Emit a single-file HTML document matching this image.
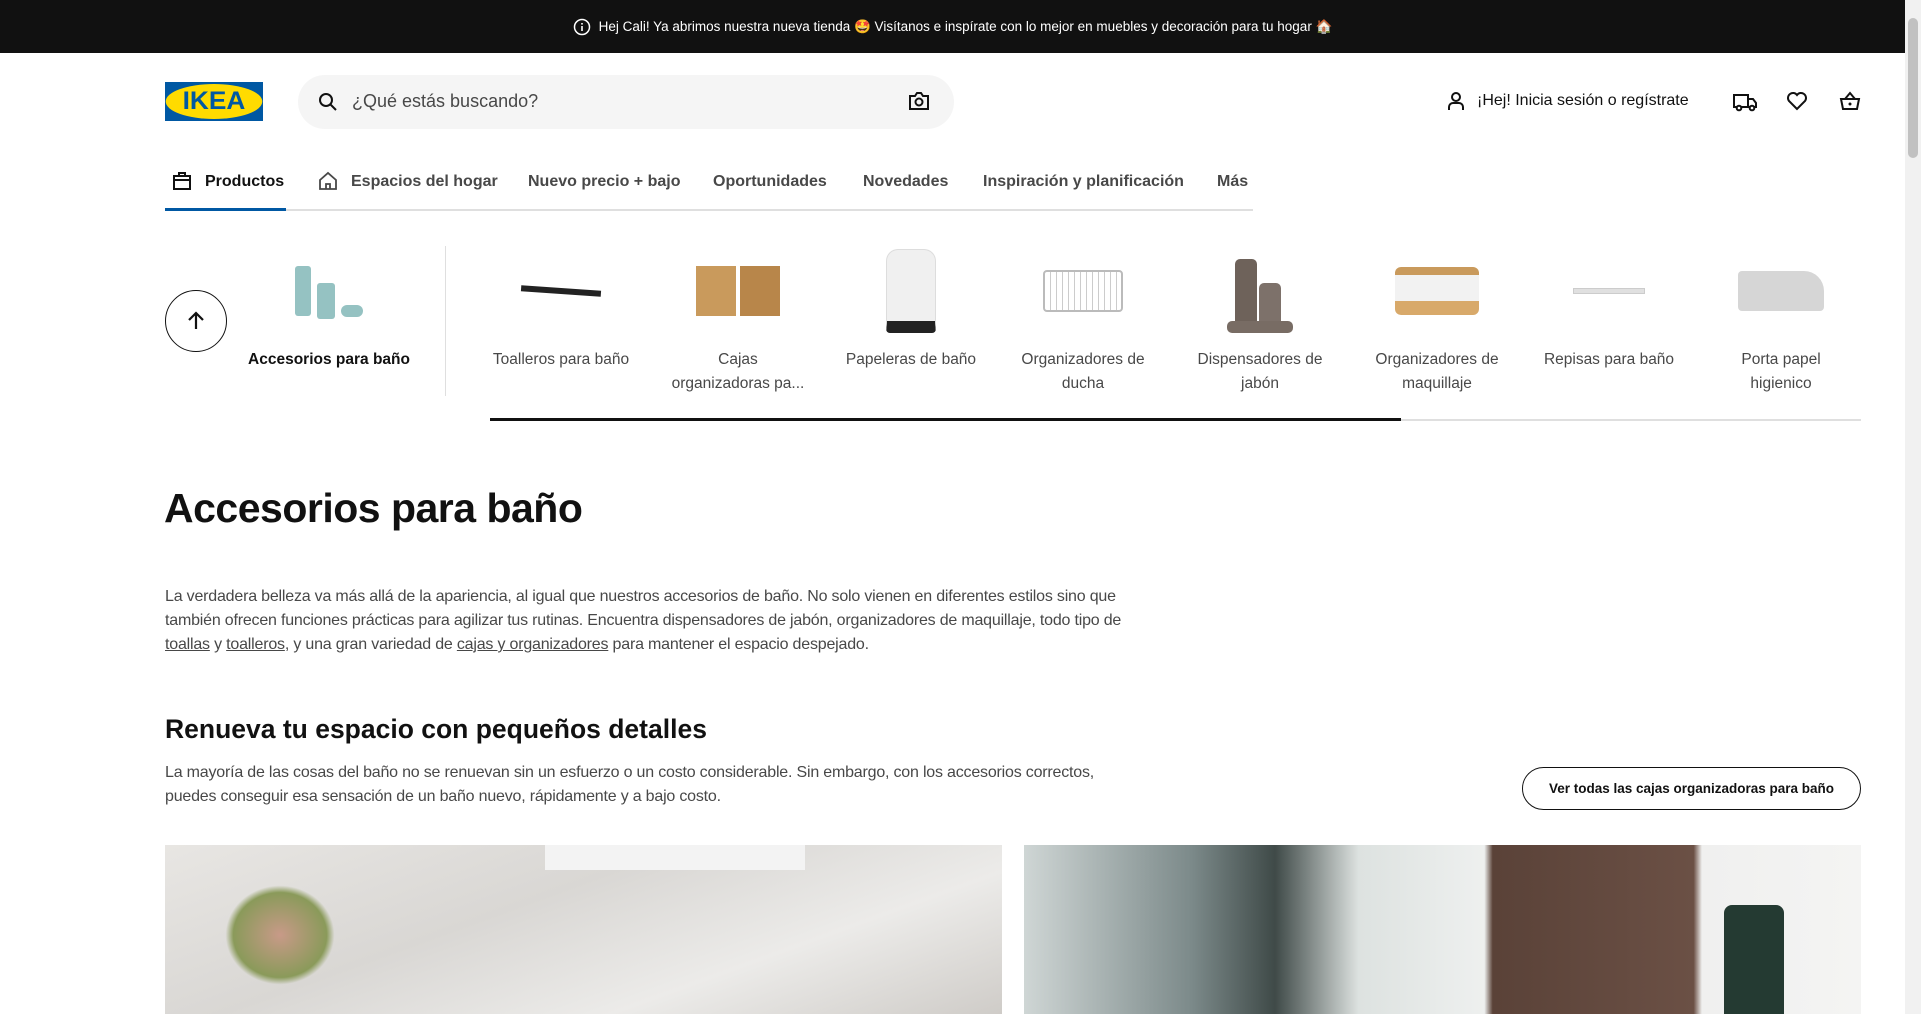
<!DOCTYPE html>
<html><head><meta charset="utf-8"><style>
*{box-sizing:border-box;margin:0;padding:0}
body{width:1921px;height:1014px;overflow:hidden;background:#fff;font-family:"Liberation Sans","Noto Sans CJK JP",sans-serif;color:#111;position:relative}
.abs{position:absolute}
.top{left:0;top:0;width:1905px;height:53px;background:#111;color:#fff;font-size:13.5px;display:flex;align-items:center;justify-content:center;gap:8px}
.scroll{right:0;top:0;width:16px;height:1014px;background:#f1f1f1}
.thumb{right:3px;top:18px;width:10px;height:140px;background:#c1c1c1;border-radius:5px}
.nav{top:173px;left:165px;font-size:16px;font-weight:bold;color:#484848}
.nav span{position:absolute;white-space:nowrap}
.cat{position:absolute;top:245px;width:140px;text-align:center;font-size:15.5px;color:#484848;line-height:24px}
.cat .img{height:92px;display:flex;align-items:center;justify-content:center;margin-bottom:11px}
p.t{font-size:16px;line-height:24px;color:#484848}
u{color:#484848}
</style></head><body>
<div class="abs top"><svg width="18" height="18" viewBox="0 0 18 18"><circle cx="9" cy="9" r="7.5" fill="none" stroke="#fff" stroke-width="1.5"/><rect x="8.2" y="8" width="1.6" height="5" fill="#fff"/><rect x="8.2" y="5" width="1.6" height="1.6" fill="#fff"/></svg><span>Hej Cali! Ya abrimos nuestra nueva tienda 🤩 Visítanos e inspírate con lo mejor en muebles y decoración para tu hogar 🏠</span></div>
<div class="abs scroll"></div><div class="abs thumb"></div>

<div class="abs" style="left:165px;top:82px;width:98px;height:39px;background:#0058a3;display:flex;align-items:center;justify-content:center"><div style="width:92px;height:35px;background:#ffdb00;border-radius:50%;display:flex;align-items:center;justify-content:center;font-weight:900;font-size:25px;color:#0058a3;letter-spacing:0px;transform:scaleX(1.05)">IKEA</div></div>
<div class="abs" style="left:298px;top:75px;width:656px;height:54px;background:#f5f5f5;border-radius:27px"></div>
<svg class="abs" style="left:318px;top:92px" width="20" height="20" viewBox="0 0 20 20"><circle cx="8" cy="8" r="6" fill="none" stroke="#111" stroke-width="2"/><path d="M12.5 12.5L18 18" stroke="#111" stroke-width="2"/></svg>
<div class="abs" style="left:352px;top:91px;font-size:18px;color:#484848">¿Qué estás buscando?</div>
<svg class="abs" style="left:908px;top:91px" width="22" height="20" viewBox="0 0 22 20"><path d="M2 5h5l2-3h4l2 3h5v13H2z" fill="none" stroke="#111" stroke-width="2"/><circle cx="11" cy="11" r="3.5" fill="none" stroke="#111" stroke-width="2"/></svg>
<svg class="abs" style="left:1445px;top:90px" width="22" height="22" viewBox="0 0 22 22"><circle cx="11" cy="7" r="4" fill="none" stroke="#111" stroke-width="2"/><path d="M4 20v-3a4 4 0 014-4h6a4 4 0 014 4v3" fill="none" stroke="#111" stroke-width="2"/></svg>
<div class="abs" style="left:1477px;top:92px;font-size:16px;color:#111">¡Hej! Inicia sesión o regístrate</div>
<svg class="abs" style="left:1732px;top:91px" width="26" height="22" viewBox="0 0 26 22"><path d="M2 4h14v12H2zM16 8h5l3 4v4h-8" fill="none" stroke="#111" stroke-width="2"/><circle cx="7" cy="17" r="2.3" fill="#fff" stroke="#111" stroke-width="2"/><circle cx="20" cy="17" r="2.3" fill="#fff" stroke="#111" stroke-width="2"/></svg>
<svg class="abs" style="left:1786px;top:91px" width="22" height="20" viewBox="0 0 22 20"><path d="M11 18L3 10a4.5 4.5 0 018-6 4.5 4.5 0 018 6z" fill="none" stroke="#111" stroke-width="2"/></svg>
<svg class="abs" style="left:1839px;top:90px" width="22" height="22" viewBox="0 0 22 22"><path d="M2 9h18l-2 10H4zM6 9l5-6 5 6" fill="none" stroke="#111" stroke-width="2"/><circle cx="11" cy="14" r="1.5" fill="#111"/></svg>

<svg class="abs" style="left:172px;top:171px" width="20" height="20" viewBox="0 0 20 20"><path d="M2 5h16v13H2zM7 5V2h6v3M2 9h16" fill="none" stroke="#111" stroke-width="2"/></svg>
<svg class="abs" style="left:318px;top:171px" width="20" height="20" viewBox="0 0 20 20"><path d="M2 9l8-7 8 7v9H2zM8 18v-5h4v5" fill="none" stroke="#484848" stroke-width="1.8"/></svg>
<div class="abs nav">
<span style="left:40px;color:#111">Productos</span>
<span style="left:186px">Espacios del hogar</span>
<span style="left:363px">Nuevo precio + bajo</span>
<span style="left:548px">Oportunidades</span>
<span style="left:698px">Novedades</span>
<span style="left:818px">Inspiración y planificación</span>
<span style="left:1052px">Más</span>
</div>
<div class="abs" style="left:165px;top:209px;width:1088px;height:2px;background:#dfdfdf"></div>
<div class="abs" style="left:165px;top:208px;width:121px;height:3px;background:#0058a3"></div>

<div class="abs" style="left:165px;top:290px;width:62px;height:62px;border:1.5px solid #111;border-radius:50%"></div>
<svg class="abs" style="left:184px;top:309px" width="24" height="24" viewBox="0 0 24 24"><path d="M12 20V5M5 11l7-7 7 7" fill="none" stroke="#111" stroke-width="2.2"/></svg>
<div class="cat" style="left:244px;width:170px"><div class="img"><div style="width:16px;height:50px;background:#7ab3b3;border-radius:3px;margin-right:6px;opacity:.8"></div><div style="width:18px;height:36px;background:#7ab3b3;border-radius:3px;margin:20px 6px 0 0;opacity:.8"></div><div style="width:22px;height:12px;background:#7ab3b3;border-radius:6px;margin-top:40px;opacity:.8"></div></div><b style="color:#111">Accesorios para baño</b></div>
<div class="abs" style="left:445px;top:246px;width:1px;height:150px;background:#dfdfdf"></div>

<div class="cat" style="left:491px"><div class="img"><div style="width:80px;height:6px;background:#222;transform:rotate(4deg)"></div></div>Toalleros para baño</div>
<div class="cat" style="left:668px"><div class="img"><div style="width:40px;height:50px;background:#c99a5c;margin-right:4px"></div><div style="width:40px;height:50px;background:#b8864a"></div></div>Cajas organizadoras pa...</div>
<div class="cat" style="left:841px"><div class="img"><div style="width:50px;height:84px;background:#f0f0f0;border:1px solid #ddd;border-bottom:12px solid #222;border-radius:12px 12px 4px 4px"></div></div>Papeleras de baño</div>
<div class="cat" style="left:1013px"><div class="img"><div style="width:80px;height:42px;border:2px solid #bbb;border-radius:4px;background:repeating-linear-gradient(90deg,#fff 0 5px,#ccc 5px 6px)"></div></div>Organizadores de ducha</div>
<div class="cat" style="left:1190px"><div class="img"><div style="width:70px;height:84px;position:relative"><div style="position:absolute;left:10px;top:10px;width:22px;height:68px;background:#6e625a;border-radius:5px"></div><div style="position:absolute;left:34px;top:34px;width:22px;height:44px;background:#7d716a;border-radius:5px"></div><div style="position:absolute;left:2px;top:72px;width:66px;height:12px;background:#786c64;border-radius:5px"></div></div></div>Dispensadores de jabón</div>
<div class="cat" style="left:1367px"><div class="img"><div style="width:84px;height:48px;background:#f2f2f2;border-bottom:14px solid #d8a96a;border-top:8px solid #c99a5c;border-radius:6px"></div></div>Organizadores de maquillaje</div>
<div class="cat" style="left:1539px"><div class="img"><div style="width:72px;height:6px;background:#e0e0e0;border:1px solid #ccc"></div></div>Repisas para baño</div>
<div class="cat" style="left:1731px;width:100px"><div class="img"><div style="width:86px;height:40px;background:#d6d6d6;border-radius:4px 20px 4px 4px"></div></div>Porta papel higienico</div>

<div class="abs" style="left:490px;top:419px;width:1371px;height:2px;background:#dfdfdf"></div>
<div class="abs" style="left:490px;top:418px;width:911px;height:3px;background:#111"></div>

<div class="abs" style="left:164px;top:485px;font-size:41px;font-weight:bold;color:#111;letter-spacing:-0.5px">Accesorios para baño</div>
<p class="abs t" style="left:165px;top:585px;width:1000px;letter-spacing:-0.2px">La verdadera belleza va más allá de la apariencia, al igual que nuestros accesorios de baño. No solo vienen en diferentes estilos sino que también ofrecen funciones prácticas para agilizar tus rutinas. Encuentra dispensadores de jabón, organizadores de maquillaje, todo tipo de <u>toallas</u> y <u>toalleros</u>, y una gran variedad de <u>cajas y organizadores</u> para mantener el espacio despejado.</p>
<div class="abs" style="left:165px;top:714px;font-size:26.5px;font-weight:bold;color:#111">Renueva tu espacio con pequeños detalles</div>
<p class="abs t" style="left:165px;top:761px;width:1000px;letter-spacing:-0.2px">La mayoría de las cosas del baño no se renuevan sin un esfuerzo o un costo considerable. Sin embargo, con los accesorios correctos,<br>puedes conseguir esa sensación de un baño nuevo, rápidamente y a bajo costo.</p>
<div class="abs" style="left:1522px;top:767px;width:339px;height:43px;border:1.5px solid #111;border-radius:22px;font-size:13.5px;font-weight:bold;display:flex;align-items:center;justify-content:center">Ver todas las cajas organizadoras para baño</div>

<div class="abs" style="left:165px;top:845px;width:837px;height:169px;background:linear-gradient(160deg,#e8e6e3 0%,#d9d7d4 40%,#ecebe9 70%,#cfccc8 100%)"><div style="position:absolute;left:380px;top:0;width:260px;height:25px;background:#f3f3f3"></div><div style="position:absolute;left:60px;top:40px;width:110px;height:100px;border-radius:50%;background:radial-gradient(#c89a88,#8a9a5a 60%,transparent 70%)"></div></div>
<div class="abs" style="left:1024px;top:845px;width:837px;height:169px;background:linear-gradient(90deg,#cfd6d5 0%,#7c8a8a 20%,#3f4a48 30%,#dde2e0 40%,#eef0ef 55%,#5a4238 56%,#6b5045 80%,#f0f0ef 81%,#f4f4f3 100%)"><div style="position:absolute;left:700px;top:60px;width:60px;height:109px;background:#243a32;border-radius:8px 8px 0 0"></div></div>
</body></html>
